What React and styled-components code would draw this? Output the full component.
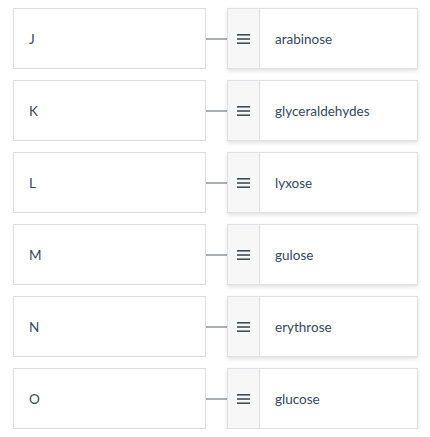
import React from 'react';
import styled, { createGlobalStyle } from 'styled-components';

const GlobalStyle = createGlobalStyle`
  body {
    margin: 0;
    background: #ffffff;
    font-family: Lato, "Open Sans", sans-serif;
  }
`

const pairs = [
  ['J', 'arabinose'],
  ['K', 'glyceraldehydes'],
  ['L', 'lyxose'],
  ['M', 'gulose'],
  ['N', 'erythrose'],
  ['O', 'glucose'],
]

const App = () => {
  return (
    <>
      <GlobalStyle />
      <List>
        {pairs.map(([label, sugar]) => (
          <Row key={label}>
            <Prompt>{label}</Prompt>
            <Connector />
            <Answer>
              <Handle>
                <svg width="13" height="10" viewBox="0 0 13 10">
                  <rect x="0" y="0" width="13" height="1.6" fill="#3f4d5a" />
                  <rect x="0" y="4.2" width="13" height="1.6" fill="#3f4d5a" />
                  <rect x="0" y="8.4" width="13" height="1.6" fill="#3f4d5a" />
                </svg>
              </Handle>
              <AnswerText>{sugar}</AnswerText>
            </Answer>
          </Row>
        ))}
      </List>
    </>
  );
}

export default App;

const List = styled.div`
  display: flex;
  flex-direction: column;
  gap: 11px;
  padding: 8px 12px 0 13px;
`
const Row = styled.div`
  display: flex;
  align-items: center;
  height: 61px;
`
const Prompt = styled.div`
  box-sizing: border-box;
  width: 193px;
  height: 100%;
  border: 1px solid #dadde1;
  display: flex;
  align-items: center;
  padding-left: 15px;
  font-size: 13.5px;
  color: #34495e;
`
const Connector = styled.div`
  width: 21px;
  height: 2px;
  background: #a3b1bd;
`
const Answer = styled.div`
  box-sizing: border-box;
  width: 191px;
  height: 100%;
  display: flex;
  border: 1px solid #dde1e5;
  box-shadow: 0 2px 4px rgba(0, 0, 0, 0.12);
  background: #fff;
`
const Handle = styled.div`
  width: 31px;
  background: #f7f7f7;
  border-right: 1px solid #dde1e5;
  display: flex;
  align-items: center;
  justify-content: center;
`
const AnswerText = styled.div`
  display: flex;
  align-items: center;
  padding-left: 15px;
  font-size: 13.5px;
  color: #34495e;
`
